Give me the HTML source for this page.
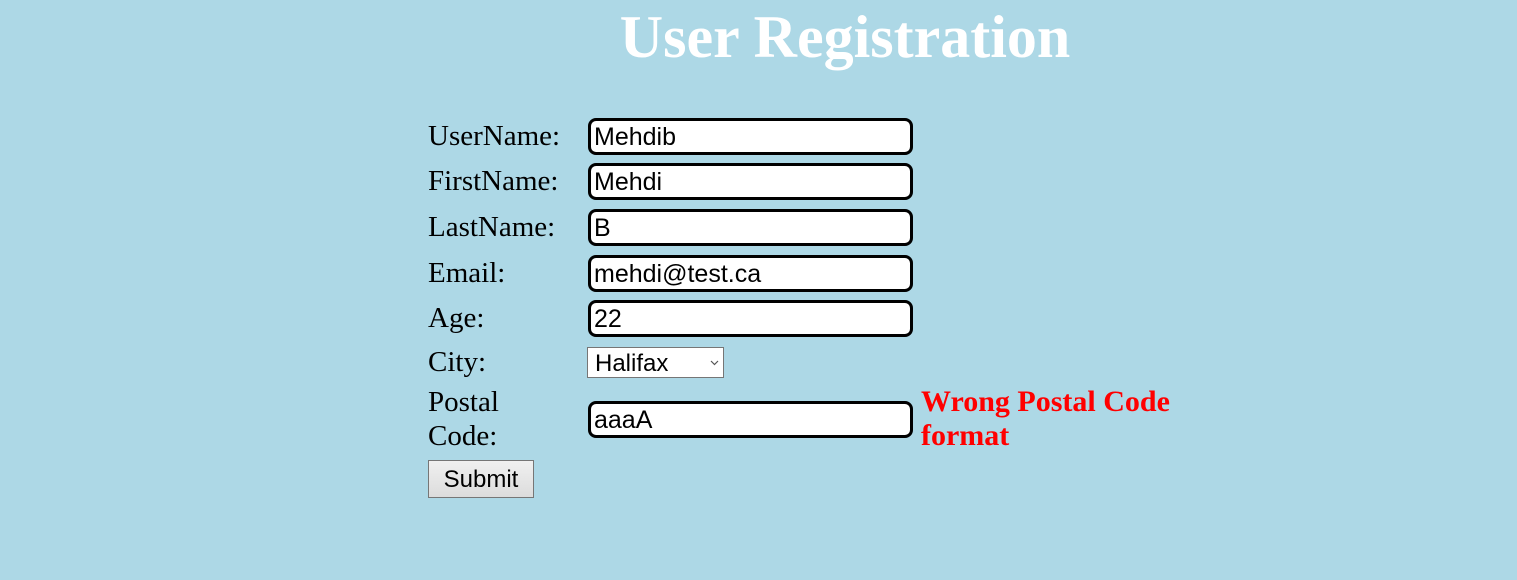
<!DOCTYPE html>
<html><head><style>
body{margin:0;background:#add8e6;width:1517px;height:580px;overflow:hidden;position:relative;font-family:"Liberation Serif",serif}
h1{position:absolute;left:0;width:1690px;top:2px;margin:0;text-align:center;color:#fff;font-size:60px;font-weight:bold;line-height:70px}
.l{position:absolute;left:428px;font-size:29px;line-height:37px;color:#000}
.i{position:absolute;left:588px;height:31px;border:3px solid #000;border-radius:8px;background:#fff;font-family:"Liberation Sans",sans-serif;font-size:25px;line-height:33px;padding-left:3px;box-sizing:content-box;width:316px}
.sel{position:absolute;left:587px;top:347px;border:1px solid #767676;background:#fff;font-family:"Liberation Sans",sans-serif;font-size:24px;line-height:31px;padding-left:7px;box-sizing:border-box;width:137px;height:31px}
.err{position:absolute;left:921px;top:385px;color:#f00;font-weight:bold;font-size:30px;line-height:34px}
.btn{position:absolute;left:428px;top:460px;width:106px;height:38px;border:1px solid #767676;background:linear-gradient(#f0f0f0,#dcdcdc);box-sizing:border-box;font-family:"Liberation Sans",sans-serif;font-size:24px;text-align:center;line-height:38px}
</style></head><body>
<h1>User Registration</h1>
<div class="l" style="top:118px">UserName:</div><div class="i" style="top:118px">Mehdib</div>
<div class="l" style="top:163px">FirstName:</div><div class="i" style="top:163px">Mehdi</div>
<div class="l" style="top:209px">LastName:</div><div class="i" style="top:209px">B</div>
<div class="l" style="top:255px">Email:</div><div class="i" style="top:255px">mehdi@test.ca</div>
<div class="l" style="top:300px">Age:</div><div class="i" style="top:300px">22</div>
<div class="l" style="top:344px">City:</div>
<div class="sel">Halifax<svg style="position:absolute;right:4px;top:12px" width="9" height="6" viewBox="0 0 9 6"><path d="M1 1l3.5 3.5L8 1" stroke="#555" fill="none" stroke-width="1.2"/></svg></div>
<div class="l" style="top:385px;line-height:34px">Postal<br>Code:</div>
<div class="i" style="top:401px">aaaA</div>
<div class="err">Wrong Postal Code<br>format</div>
<div class="btn">Submit</div>
</body></html>
